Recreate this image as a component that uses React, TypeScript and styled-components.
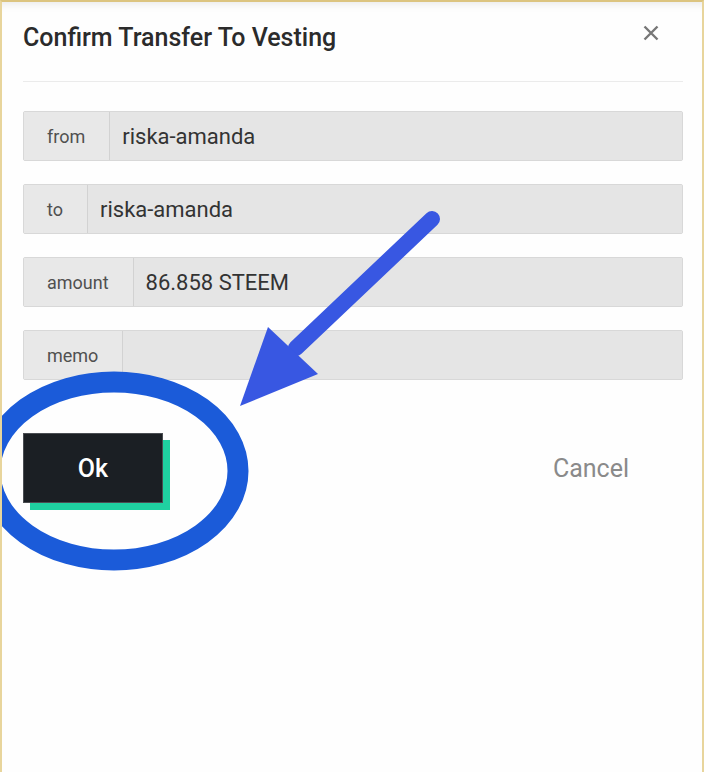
import React from "react";
import styled, { createGlobalStyle } from "styled-components";

const Global = createGlobalStyle`
  html, body { margin: 0; padding: 0; background: #ffffff; }
  body { font-family: Roboto, "Noto Sans", "Liberation Sans", sans-serif; }
  * { box-sizing: border-box; }
`;

const Frame = styled.div`
  position: relative;
  width: 704px;
  height: 772px;
  background: #fefefe;
  border-top: 2px solid #dcc47f;
  border-left: 2px solid #e8d59c;
  border-right: 2px solid #e8d59c;
  box-shadow: inset 0 10px 10px -8px rgba(0, 0, 0, 0.09);
  overflow: hidden;
`;

const Content = styled.div`
  padding: 0 19px 0 21px;
`;

const Header = styled.div`
  display: flex;
  justify-content: space-between;
  align-items: flex-start;
  padding: 22px 0 29px;
  border-bottom: 1px solid #ebebeb;
`;

const Title = styled.h1`
  margin: 0;
  font-size: 25px;
  line-height: 28px;
  font-weight: 500;
  color: #2b2b2b;
`;

const Close = styled.button`
  margin: 1px 24px 0 0;
  padding: 0;
  border: none;
  background: transparent;
  width: 16px;
  height: 16px;
  display: flex;
  cursor: pointer;
`;

const Form = styled.div`
  display: flex;
  flex-direction: column;
  gap: 23px;
  margin-top: 29px;
`;

const Row = styled.div`
  display: flex;
  height: 50px;
  background: #e6e6e6;
  border: 1px solid #d8d8d8;
  border-radius: 2px;
`;

const Label = styled.div`
  display: flex;
  align-items: center;
  padding: 0 24px 0 23px;
  font-size: 18px;
  color: #505050;
  background: #e8e8e8;
  border-right: 1px solid #d2d2d2;
`;

const Value = styled.div`
  flex: 1;
  display: flex;
  align-items: center;
  padding-left: 12px;
  font-size: 22px;
  color: #333333;
  background: #e5e5e5;
`;

const Actions = styled.div`
  display: flex;
  justify-content: space-between;
  align-items: center;
  margin-top: 53px;
`;

const OkButton = styled.button`
  width: 140px;
  height: 70px;
  border: 1px solid #4a4d52;
  background: #1b1f24;
  color: #ffffff;
  font-family: inherit;
  font-size: 25px;
  font-weight: 500;
  box-shadow: 7px 7px 0 #1fd1a1;
  cursor: pointer;
`;

const CancelButton = styled.button`
  margin-right: 54px;
  padding: 0;
  border: none;
  background: transparent;
  color: #8a8a8a;
  font-family: inherit;
  font-size: 25px;
  cursor: pointer;
`;

const Annotation = styled.svg`
  position: absolute;
  left: -2px;
  top: -2px;
  pointer-events: none;
`;

const fields = [
  { label: "from", value: "riska-amanda" },
  { label: "to", value: "riska-amanda" },
  { label: "amount", value: "86.858 STEEM" },
  { label: "memo", value: "" },
];

export default function App() {
  return (
    <>
      <Global />
      <Frame>
        <Content>
          <Header>
            <Title>Confirm Transfer To Vesting</Title>
            <Close aria-label="close">
              <svg width="16" height="16" viewBox="0 0 16 16">
                <path d="M1.5 1.5 L14.5 14.5 M14.5 1.5 L1.5 14.5" stroke="#777" strokeWidth="2.4" strokeLinecap="butt" />
              </svg>
            </Close>
          </Header>
          <Form>
            {fields.map((f) => (
              <Row key={f.label}>
                <Label>{f.label}</Label>
                <Value>{f.value}</Value>
              </Row>
            ))}
          </Form>
          <Actions>
            <OkButton>Ok</OkButton>
            <CancelButton>Cancel</CancelButton>
          </Actions>
        </Content>
        <Annotation width="704" height="772" viewBox="0 0 704 772">
          <line x1="432" y1="219" x2="296" y2="348" stroke="#3857e2" strokeWidth="16" strokeLinecap="round" />
          <polygon points="268,327 318,374 240,406" fill="#3857e2" />
          <ellipse cx="114" cy="471" rx="124" ry="89" fill="none" stroke="#1b5bd9" strokeWidth="21" />
        </Annotation>
      </Frame>
    </>
  );
}
